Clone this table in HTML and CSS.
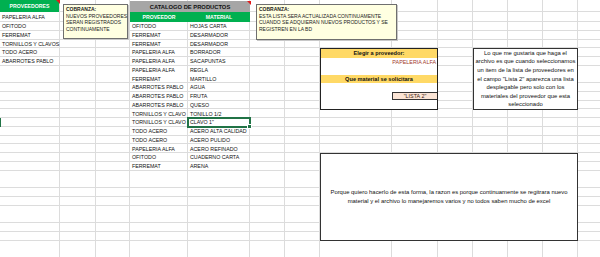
FILE: index.html
```html
<!DOCTYPE html>
<html lang="es">
<head>
<meta charset="utf-8">
<title>Catalogo de productos</title>
<link rel="stylesheet" href="styles.css">
</head>
<body>
<div class="sheet">
  <div class="lines-top"></div>
  <div class="lines-body"></div>

  <div class="prov">
    <div class="hdr green flag">PROVEEDORES</div>
    <div class="c">PAPELERIA ALFA</div>
    <div class="c">OFITODO</div>
    <div class="c">FERREMAT</div>
    <div class="c">TORNILLOS Y CLAVOS</div>
    <div class="c">TODO ACERO</div>
    <div class="c">ABARROTES PABLO</div>
  </div>

  <div class="rowmark"></div>

  <div class="catalog">
    <div class="title flag">CATALOGO DE PRODUCTOS</div>
    <div class="hdr green">PROVEEDOR</div>
    <div class="hdr green">MATERIAL</div>
    <div class="c">OFITODO</div><div class="c">HOJAS CARTA</div>
    <div class="c">FERREMAT</div><div class="c">DESARMADOR</div>
    <div class="c">FERREMAT</div><div class="c">DESARMADOR</div>
    <div class="c">PAPELERIA ALFA</div><div class="c">BORRADOR</div>
    <div class="c">PAPELERIA ALFA</div><div class="c">SACAPUNTAS</div>
    <div class="c">PAPELERIA ALFA</div><div class="c">REGLA</div>
    <div class="c">FERREMAT</div><div class="c">MARTILLO</div>
    <div class="c">ABARROTES PABLO</div><div class="c">AGUA</div>
    <div class="c">ABARROTES PABLO</div><div class="c">FRUTA</div>
    <div class="c">ABARROTES PABLO</div><div class="c">QUESO</div>
    <div class="c">TORNILLOS Y CLAVO</div><div class="c">TONILLO 1/2</div>
    <div class="c">TORNILLOS Y CLAVO</div><div class="c sel">CLAVO 1"</div>
    <div class="c">TODO ACERO</div><div class="c">ACERO ALTA CALIDAD</div>
    <div class="c">TODO ACERO</div><div class="c">ACERO PULIDO</div>
    <div class="c">PAPELERIA ALFA</div><div class="c">ACERO REFINADO</div>
    <div class="c">OFITODO</div><div class="c">CUADERNO CARTA</div>
    <div class="c">FERREMAT</div><div class="c">ARENA</div>
  </div>

  <div class="picker">
    <div class="p-head">Elegir a proveedor:</div>
    <div class="p-value">PAPELERIA ALFA</div>
    <div class="p-empty"></div>
    <div class="p-head">Que material se solicitara</div>
    <div class="p-empty"></div>
    <div class="p-list"><span></span><span class="list2">"LISTA 2"</span></div>
    <div class="p-empty"></div>
  </div>

  <div class="note">
    <p>Lo que me gustaria que haga el<br>archivo es que cuando seleccionamos<br>un item de la lista de proveedores en<br>el campo "Lista 2" aparezca una lista<br>desplegable pero solo con los<br>materiales del proveedor que esta<br>seleccionado</p>
  </div>

  <div class="reason">
    <p>Porque quiero hacerlo de esta forma, la razon es porque continuamente se regitrara nuevo<br>material y el archivo lo manejaremos varios y no todos saben mucho de excel</p>
  </div>

  <div class="comment c1">
    <b>COBRANZA:</b><br>NUEVOS PROVEEDORES<br>SERAN REGISTRADOS<br>CONTINUAMENTE
  </div>
  <div class="comment c2">
    <b>COBRANZA:</b><br>ESTA LISTA SERA ACTUALIZADA CONTINUAMENTE<br>CUANDO SE ADQUIERAN NUEVOS PRODUCTOS Y SE<br>REGISTREN EN LA BD
  </div>
</div>
</body>
</html>
```

FILE: styles.css
```css
* { box-sizing: border-box; }
html, body { margin: 0; padding: 0; background: #fff; }
body { font-family: "Liberation Sans", Arial, sans-serif; color: #111; }

.sheet {
  position: relative;
  width: 600px;
  height: 257px;
  overflow: hidden;
  display: grid;
  grid-template-columns: 60px 36px 34px 58px 62px 35px 35px 72px 46px 35px 35px 35px 35px 1fr;
  grid-template-rows: 12px 10px repeat(27, 8.75px);
  background: #fff linear-gradient(to right,
    transparent 59px, #dcdcdc 59px 60px,
    transparent 60px 95px, #dcdcdc 95px 96px,
    transparent 96px 129px, #dcdcdc 129px 130px,
    transparent 130px 187px, #dcdcdc 187px 188px,
    transparent 188px 249px, #dcdcdc 249px 250px,
    transparent 250px 284px, #dcdcdc 284px 285px,
    transparent 285px 319px, #dcdcdc 319px 320px,
    transparent 320px 391px, #dcdcdc 391px 392px,
    transparent 392px 437px, #dcdcdc 437px 438px,
    transparent 438px 472px, #dcdcdc 472px 473px,
    transparent 473px 507px, #dcdcdc 507px 508px,
    transparent 508px 542px, #dcdcdc 542px 543px,
    transparent 543px 577px, #dcdcdc 577px 578px,
    transparent 578px);
}

.lines-top {
  grid-row: 1 / 3;
  grid-column: 1 / -1;
  background: linear-gradient(to bottom, transparent 11px, #dcdcdc 11px 12px, transparent 12px 21px, #dcdcdc 21px 22px);
}
.lines-body {
  grid-row: 3 / -1;
  grid-column: 1 / -1;
  background: repeating-linear-gradient(to bottom, transparent 0 7.75px, #dcdcdc 7.75px 8.75px);
}

.rowmark {
  grid-column: 1;
  grid-row: 14;
  width: 1px;
  background: #217346;
}

.c {
  font-size: 5.3px;
  line-height: 1;
  display: flex;
  align-items: center;
  padding: 1px 0 0 2px;
  white-space: nowrap;
}

.hdr {
  font-size: 5.2px;
  font-weight: bold;
  display: flex;
  align-items: center;
  justify-content: center;
  white-space: nowrap;
}
.green { background: #00b050; color: #fff; }

.flag { position: relative; }
.flag::after {
  content: "";
  position: absolute;
  top: 0;
  right: -1px;
  border-top: 4px solid #e21b1b;
  border-left: 4px solid transparent;
}

.prov {
  grid-column: 1;
  grid-row: 1 / 8;
  display: grid;
  grid-template-rows: 12px 10px repeat(5, 8.75px);
}
.prov .hdr { margin-right: 1px; }

.catalog {
  grid-column: 4 / 6;
  grid-row: 1 / 20;
  display: grid;
  grid-template-columns: 58px 62px;
  grid-template-rows: 12px 10px repeat(17, 8.75px);
}
.catalog .title {
  grid-column: 1 / -1;
  background: #a6a6a6;
  font-size: 5.8px;
  font-weight: bold;
  display: flex;
  align-items: center;
  justify-content: center;
  margin-top: 1px;
}
.sel {
  position: relative;
  z-index: 1;
  outline: 2px solid #217346;
  outline-offset: -1px;
}
.sel::after {
  content: "";
  position: absolute;
  right: -2px;
  bottom: -2px;
  width: 3px;
  height: 3px;
  background: #217346;
  border: 1px solid #fff;
}

.picker {
  grid-column: 8 / 10;
  grid-row: 6 / 13;
  border: 1px solid #222;
  background: #fff;
  display: grid;
  grid-template-rows: repeat(7, 1fr);
  z-index: 1;
}
.p-head {
  background: #ffd966;
  font-size: 5.6px;
  font-weight: bold;
  display: flex;
  align-items: center;
  justify-content: center;
  white-space: nowrap;
}
.p-value {
  font-size: 5.4px;
  color: #a23a2c;
  display: flex;
  align-items: center;
  justify-content: flex-end;
  padding-right: 1px;
}
.p-list {
  display: grid;
  grid-template-columns: 71px 1fr;
}
.list2 {
  background: #fbe4d5;
  border: 1px solid #333;
  border-right: 0;
  font-size: 5.4px;
  color: #3a1a10;
  display: flex;
  align-items: center;
  justify-content: center;
}

.note {
  grid-column: 11 / 14;
  grid-row: 6 / 13;
  border: 1.5px solid #333;
  background: #fff;
  display: flex;
  align-items: center;
  justify-content: center;
  z-index: 1;
}
.note p {
  margin: 0;
  font-size: 5.9px;
  line-height: 8.6px;
  text-align: center;
  white-space: nowrap;
}

.reason {
  grid-column: 8 / 14;
  grid-row: 18 / 28;
  border: 1.5px solid #333;
  background: #fff;
  display: flex;
  align-items: center;
  justify-content: center;
  z-index: 1;
}
.reason p {
  margin: 0;
  font-size: 5.9px;
  line-height: 9px;
  text-align: center;
  white-space: nowrap;
}

.comment {
  position: absolute;
  top: 4px;
  z-index: 3;
  background: #ffffe1;
  border: 1px solid #6f6f6f;
  box-shadow: 1px 1px 0 #c8c8c8;
  font-size: 5px;
  line-height: 6.7px;
  padding: 1px 2px;
  color: #222;
  white-space: nowrap;
}
.comment b { font-weight: bold; }
.c1 { left: 63px; width: 65px; height: 35px; }
.c2 { left: 256px; width: 141px; height: 36px; }
```
